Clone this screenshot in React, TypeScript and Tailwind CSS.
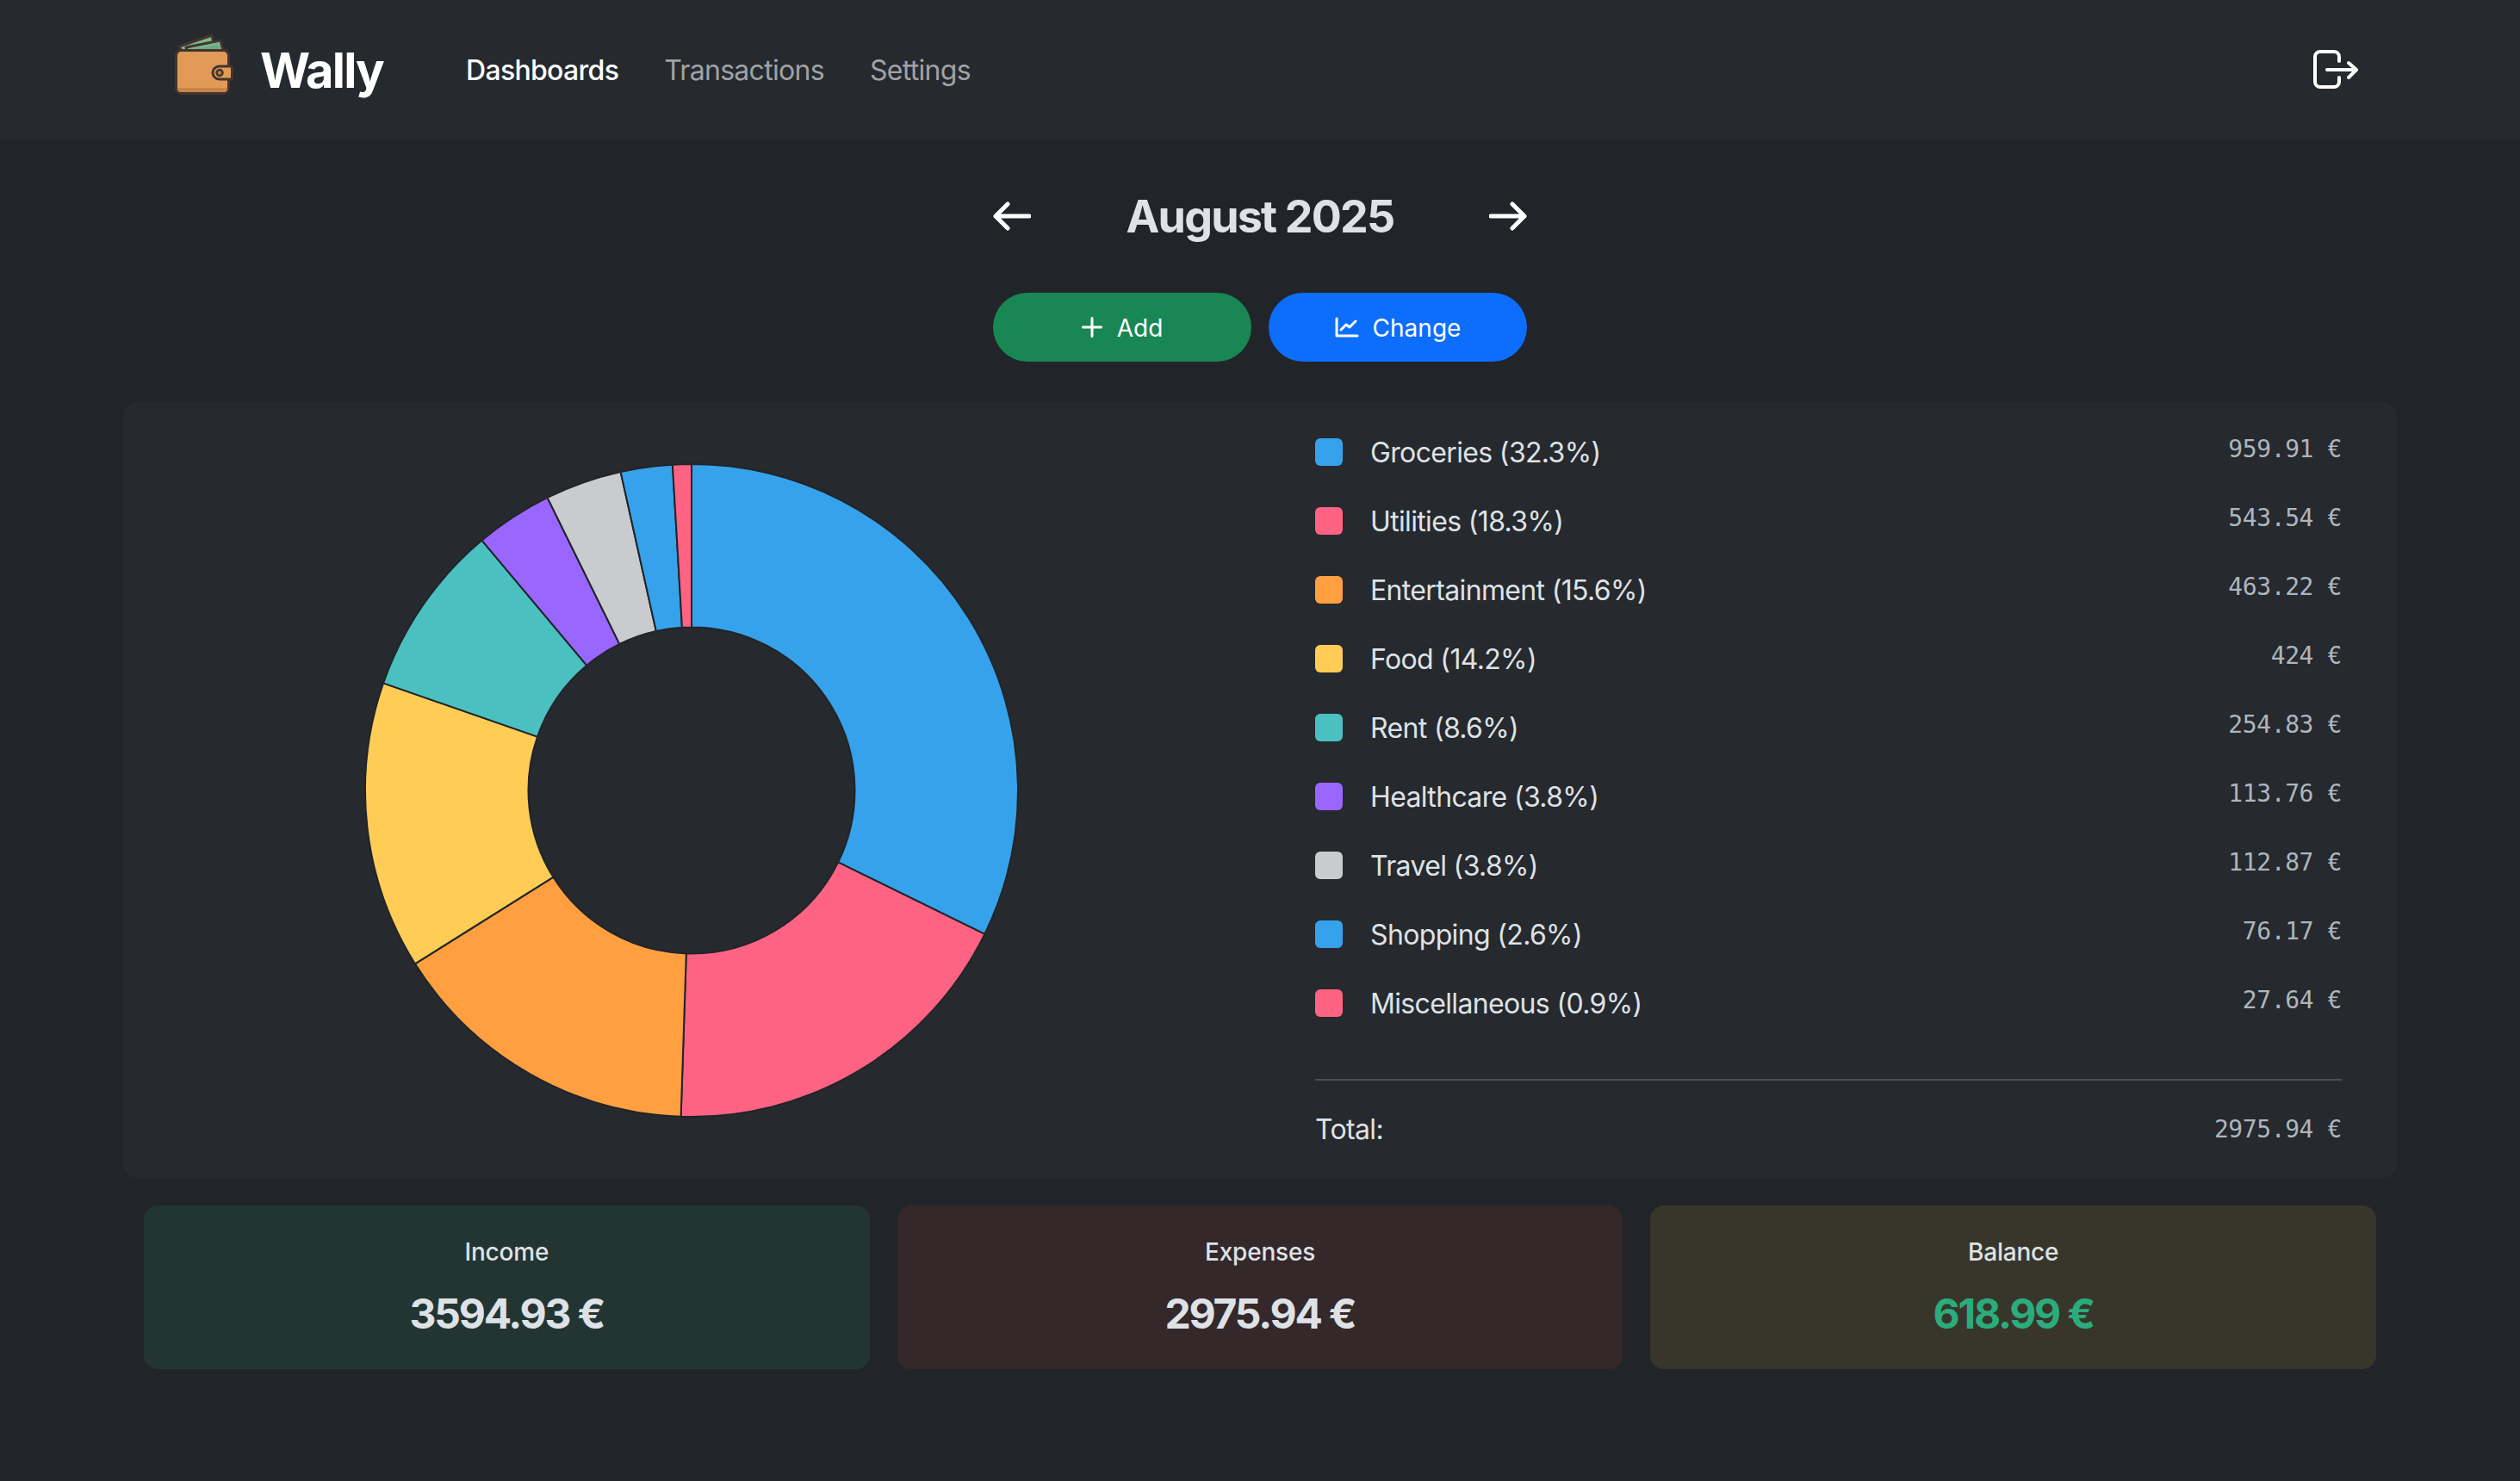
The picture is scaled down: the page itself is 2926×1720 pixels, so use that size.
const inter = "font-['Inter',sans-serif]";

const slices = [
  { name: 'Groceries', pct: '32.3%', value: 959.91, label: '959.91 €', color: '#36A2EB' },
  { name: 'Utilities', pct: '18.3%', value: 543.54, label: '543.54 €', color: '#FF6384' },
  { name: 'Entertainment', pct: '15.6%', value: 463.22, label: '463.22 €', color: '#FF9F40' },
  { name: 'Food', pct: '14.2%', value: 424, label: '424 €', color: '#FFCD56' },
  { name: 'Rent', pct: '8.6%', value: 254.83, label: '254.83 €', color: '#4BC0C0' },
  { name: 'Healthcare', pct: '3.8%', value: 113.76, label: '113.76 €', color: '#9966FF' },
  { name: 'Travel', pct: '3.8%', value: 112.87, label: '112.87 €', color: '#C9CBCF' },
  { name: 'Shopping', pct: '2.6%', value: 76.17, label: '76.17 €', color: '#36A2EB' },
  { name: 'Miscellaneous', pct: '0.9%', value: 27.64, label: '27.64 €', color: '#FF6384' },
];

function Donut() {
  const total = slices.reduce((sum, s) => sum + s.value, 0);
  const outer = 379;
  const inner = 189.5;
  const point = (r: number, a: number) => `${(r * Math.sin(a)).toFixed(2)} ${(-r * Math.cos(a)).toFixed(2)}`;
  let start = 0;
  return (
    <svg width="760" height="760" viewBox="-380 -380 760 760">
      {slices.map((s) => {
        const a0 = start;
        const a1 = start + (s.value / total) * Math.PI * 2;
        start = a1;
        const large = a1 - a0 > Math.PI ? 1 : 0;
        const d = `M${point(outer, a0)}A${outer} ${outer} 0 ${large} 1 ${point(outer, a1)}L${point(inner, a1)}A${inner} ${inner} 0 ${large} 0 ${point(inner, a0)}Z`;
        return <path key={s.name} d={d} fill={s.color} stroke="#212529" strokeWidth="2" strokeLinejoin="round" />;
      })}
    </svg>
  );
}

function WalletLogo() {
  return (
    <svg className="mb-[13px]" width="68" height="72" viewBox="0 0 68 72" strokeLinejoin="round">
      <path d="M5 15 43 2l4 18H8z" fill="#7fb88f" stroke="#43352d" strokeWidth="3" />
      <path d="M13 16 53 8l4 16H15z" fill="#79b78d" stroke="#43352d" strokeWidth="3" />
      <path d="M18 19 50 13l3 9H20z" fill="#6aab80" />
      <rect x="1.500" y="19.500" width="61" height="50" rx="6" fill="#e19b56" stroke="#43352d" strokeWidth="3" />
      <path d="M3 63h58v1a4 4 0 0 1-4 4H7a4 4 0 0 1-4-4z" fill="#c9854a" />
      <path d="M66.500 38H51.500a7.500 7.500 0 0 0 0 15h15z" fill="#e19b56" stroke="#43352d" strokeWidth="3" />
      <circle cx="52" cy="45.500" r="3.500" fill="#b97b42" stroke="#43352d" strokeWidth="2.500" />
    </svg>
  );
}

function StatCard({ title, amount, bg, color }: { title: string; amount: string; bg: string; color: string }) {
  return (
    <div className={`flex h-[190px] flex-1 flex-col items-center rounded-2xl pt-[36px] ${bg}`}>
      <div className="text-[28px] leading-[36px] font-medium tracking-[-0.2px] text-[#dee2e6]">{title}</div>
      <div className={`mt-[24px] text-[48px] leading-[60px] font-bold tracking-[-2.2px] ${color}`}>{amount}</div>
    </div>
  );
}

export default function App() {
  return (
    <div className={`h-[1720px] bg-[#212529] ${inter}`}>
      <nav className="h-[162px] bg-[#26292e]">
        <div className="mx-auto flex h-full w-[2640px] items-center px-[60px]">
          <WalletLogo />
          <span className="ml-[31px] pt-[2px] text-[56px] leading-none font-bold tracking-[-1.8px] text-white">Wally</span>
          <div className="ml-[96px] flex gap-[53px] pt-[2px] text-[32px] tracking-[-0.7px]">
            <span className="font-medium text-white">Dashboards</span>
            <span className="text-[#a0a2a4]">Transactions</span>
            <span className="text-[#a0a2a4]">Settings</span>
          </div>
          <svg className="ml-auto mr-[-15px]" width="56" height="50" viewBox="0 0 56 50" fill="none" stroke="white" strokeWidth="4" strokeLinecap="round" strokeLinejoin="round">
            <path d="M34 15V10a6 6 0 0 0-6-6H12a6 6 0 0 0-6 6v29a6 6 0 0 0 6 6h16a6 6 0 0 0 6-6v-5" />
            <path d="M20 25h34M45 17l9 8-9 9" />
          </svg>
        </div>
      </nav>

      <main className="mx-auto w-[2640px]">
        <div className="flex h-[178px] items-center justify-center">
          <div className="flex w-[620px] items-center justify-between">
            <svg width="44" height="34" viewBox="0 0 44 34" fill="none" stroke="white" strokeWidth="5" strokeLinecap="round" strokeLinejoin="round">
              <path d="M42 17H3M17 3 3 17l14 14" />
            </svg>
            <h1 className="pt-[2px] text-[52px] leading-none font-bold tracking-[-1.8px] text-[#dee2e6]">August 2025</h1>
            <svg width="44" height="34" viewBox="0 0 44 34" fill="none" stroke="white" strokeWidth="5" strokeLinecap="round" strokeLinejoin="round">
              <path d="M2 17h39M27 3l14 14-14 14" />
            </svg>
          </div>
        </div>

        <div className="flex justify-center gap-[20px]">
          <button className="flex h-[80px] w-[300px] items-center justify-center gap-[17px] rounded-full bg-[#198754] text-[28px] text-white">
            <svg width="24" height="24" viewBox="0 0 24 24" fill="none" stroke="white" strokeWidth="3" strokeLinecap="round">
              <path d="M12 1.500v21M1.500 12h21" />
            </svg>
            <span className="pt-[2px]">Add</span>
          </button>
          <button className="flex h-[80px] w-[300px] items-center justify-center gap-[16px] rounded-full bg-[#0d6efd] text-[28px] text-white">
            <svg width="28" height="24" viewBox="0 0 28 24" fill="none" stroke="white" strokeWidth="3" strokeLinecap="round" strokeLinejoin="round">
              <path d="M2 2v20h24M7 15l6-6 4 3 7-7" />
            </svg>
            <span className="pt-[2px]">Change</span>
          </button>
        </div>

        <section className="mt-[47px] flex h-[901px] rounded-2xl bg-[#26292e]">
          <div className="flex w-[1320px] items-center justify-center">
            <Donut />
          </div>
          <div className="flex flex-1 flex-col px-[64px] pt-[18px]">
            {slices.map((s) => (
              <div key={s.name} className="flex h-[80px] items-center">
                <span className="h-[32px] w-[32px] rounded-md" style={{ backgroundColor: s.color }} />
                <span className="ml-[32px] pt-[2px] text-[32px] tracking-[-0.65px] text-[#dee2e6]">
                  {s.name} ({s.pct})
                </span>
                <span className="ml-auto -translate-y-[3px] font-['DejaVu_Sans_Mono',monospace] text-[28px] tracking-[-0.4px] text-[#adb5bd]">{s.label}</span>
              </div>
            ))}
            <div className="mt-[48px] flex h-[113px] items-center justify-between border-t-2 border-[#495057]">
              <span className="pt-[2px] text-[32px] tracking-[-0.65px] text-[#dee2e6]">Total:</span>
              <span className="pt-[2px] font-['DejaVu_Sans_Mono',monospace] text-[28px] tracking-[-0.4px] text-[#adb5bd]">2975.94 €</span>
            </div>
          </div>
        </section>

        <div className="mt-[32px] flex gap-[32px] px-[24px]">
          <StatCard title="Income" amount="3594.93 €" bg="bg-[#233533]" color="text-[#dee2e6]" />
          <StatCard title="Expenses" amount="2975.94 €" bg="bg-[#34282b]" color="text-[#dee2e6]" />
          <StatCard title="Balance" amount="618.99 €" bg="bg-[#38362b]" color="text-[#2bac7d]" />
        </div>
      </main>
    </div>
  );
}
